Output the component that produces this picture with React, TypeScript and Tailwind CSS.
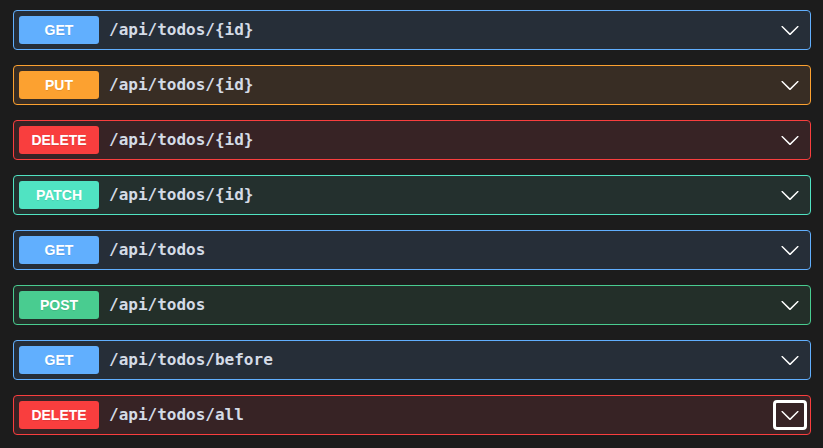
const ops = [
  { method: 'GET', path: '/api/todos/{id}', border: 'border-[#61affe]', bg: 'bg-[#262e38]', badge: 'bg-[#61affe]' },
  { method: 'PUT', path: '/api/todos/{id}', border: 'border-[#fca130]', bg: 'bg-[#382d24]', badge: 'bg-[#fca130]' },
  { method: 'DELETE', path: '/api/todos/{id}', border: 'border-[#f93e3e]', bg: 'bg-[#372325]', badge: 'bg-[#f93e3e]' },
  { method: 'PATCH', path: '/api/todos/{id}', border: 'border-[#50e3c2]', bg: 'bg-[#24302e]', badge: 'bg-[#50e3c2]' },
  { method: 'GET', path: '/api/todos', border: 'border-[#61affe]', bg: 'bg-[#262e38]', badge: 'bg-[#61affe]' },
  { method: 'POST', path: '/api/todos', border: 'border-[#49cc90]', bg: 'bg-[#232f29]', badge: 'bg-[#49cc90]' },
  { method: 'GET', path: '/api/todos/before', border: 'border-[#61affe]', bg: 'bg-[#262e38]', badge: 'bg-[#61affe]' },
  { method: 'DELETE', path: '/api/todos/all', border: 'border-[#f93e3e]', bg: 'bg-[#372325]', badge: 'bg-[#f93e3e]', focused: true },
];

function Chevron() {
  return (
    <svg width="20" height="20" viewBox="0 0 20 20">
      <path
        fill="#fff"
        d="M17.418 6.109c.272-.268.709-.268.979 0s.271.701 0 .969l-7.908 7.83c-.27.268-.707.268-.979 0l-7.908-7.83c-.27-.268-.27-.701 0-.969.271-.268.709-.268.979 0L10 13.25l7.418-7.141z"
      />
    </svg>
  );
}

export default function App() {
  return (
    <div className="min-h-[448px] w-full bg-[#1c1c1c] pt-[10px] pl-[13px] pr-[12px] flex flex-col gap-[15px]">
      {ops.map((op, i) => (
        <div
          key={i}
          className={`h-[40px] flex items-center border rounded-[4px] pl-[5px] pr-[3px] ${op.border} ${op.bg}`}
        >
          <span
            className={`w-[80px] h-[28px] rounded-[3px] flex items-center justify-center text-white text-[14px] font-bold ${op.badge}`}
            style={{ fontFamily: '"Liberation Sans", Arial, sans-serif', textShadow: '0 1px 0 rgba(0,0,0,.1)' }}
          >
            {op.method}
          </span>
          <span
            className="flex-1 pl-[10px] text-[16px] font-semibold text-[#d4dbe6]"
            style={{ fontFamily: '"DejaVu Sans Mono", monospace' }}
          >
            {op.path}
          </span>
          <button
            className={`w-[34px] h-[30px] flex items-center justify-center rounded-[4px] ${op.focused ? 'border-[3px] border-white' : ''}`}
          >
            <Chevron />
          </button>
        </div>
      ))}
    </div>
  );
}
